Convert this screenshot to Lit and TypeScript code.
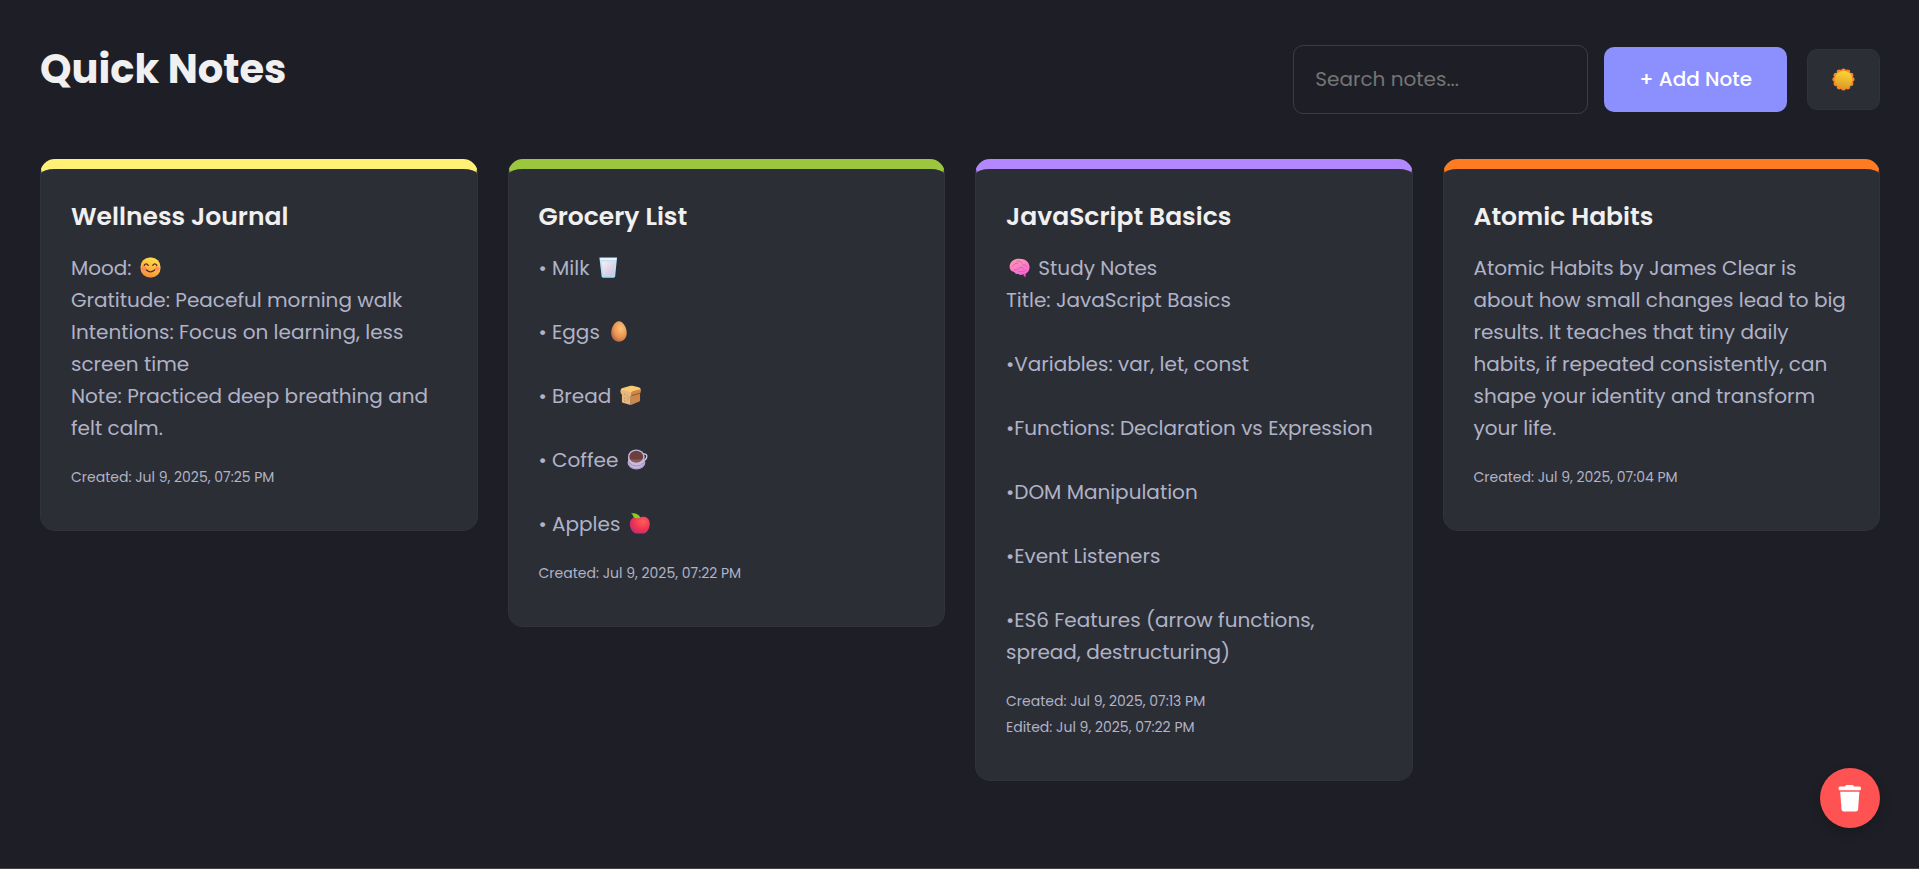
import { LitElement, html, css, svg, nothing } from "lit";
import { customElement, property, state } from "lit/decorators.js";

type EmojiName = "smile" | "milk" | "egg" | "bread" | "coffee" | "apple" | "brain" | "sun";
type Part = string | { emoji: EmojiName };

interface Note {
  title: string;
  tone: "yellow" | "green" | "purple" | "orange";
  lines: Part[][];
  created: string;
  edited?: string;
}

const e = (emoji: EmojiName): Part => ({ emoji });

const NOTES: Note[] = [
  {
    title: "Wellness Journal",
    tone: "yellow",
    lines: [
      ["Mood: ", e("smile")],
      ["Gratitude: Peaceful morning walk"],
      ["Intentions: Focus on learning, less screen time"],
      ["Note: Practiced deep breathing and felt calm."],
    ],
    created: "Jul 9, 2025, 07:25 PM",
  },
  {
    title: "Grocery List",
    tone: "green",
    lines: [
      ["• Milk ", e("milk")],
      [],
      ["• Eggs ", e("egg")],
      [],
      ["• Bread ", e("bread")],
      [],
      ["• Coffee ", e("coffee")],
      [],
      ["• Apples ", e("apple")],
    ],
    created: "Jul 9, 2025, 07:22 PM",
  },
  {
    title: "JavaScript Basics",
    tone: "purple",
    lines: [
      [e("brain"), " Study Notes"],
      ["Title: JavaScript Basics"],
      [],
      ["•Variables: var, let, const"],
      [],
      ["•Functions: Declaration vs Expression"],
      [],
      ["•DOM Manipulation"],
      [],
      ["•Event Listeners"],
      [],
      ["•ES6 Features (arrow functions, spread, destructuring)"],
    ],
    created: "Jul 9, 2025, 07:13 PM",
    edited: "Jul 9, 2025, 07:22 PM",
  },
  {
    title: "Atomic Habits",
    tone: "orange",
    lines: [
      [
        "Atomic Habits by James Clear is about how small changes lead to big results. It teaches that tiny daily habits, if repeated consistently, can shape your identity and transform your life.",
      ],
    ],
    created: "Jul 9, 2025, 07:04 PM",
  },
];

const rays = Array.from({ length: 12 }, (_, i) => {
  const a = (i * Math.PI) / 6;
  return svg`<circle cx=${12 + 9 * Math.sin(a)} cy=${12 - 9 * Math.cos(a)} r="2.6" fill="#f8862b" />`;
});

const EMOJI = {
  smile: svg`
    <defs>
      <linearGradient id="g" x1="0.7" y1="0" x2="0.3" y2="1">
        <stop offset="0" stop-color="#ffe04f" /><stop offset="0.6" stop-color="#ffb136" /><stop offset="1" stop-color="#f5893f" />
      </linearGradient>
    </defs>
    <rect x="0.6" y="0.6" width="22.8" height="22.8" rx="10.4" fill="url(#g)" />
    <circle cx="4.4" cy="13.2" r="2.7" fill="#ff6f6a" opacity="0.6" />
    <circle cx="19.6" cy="13.2" r="2.7" fill="#ff6f6a" opacity="0.6" />
    <path d="M4.8 9.6q2.2-3.6 4.6 0M14.6 9.6q2.4-3.6 4.6 0M7.4 14.9q4.6 4.2 9.2 0" fill="none" stroke="#4b2a3f" stroke-width="1.5" stroke-linecap="round" />`,
  milk: svg`
    <defs>
      <linearGradient id="g" x1="0" y1="0" x2="0" y2="1">
        <stop offset="0" stop-color="#c4e4f8" /><stop offset="1" stop-color="#a9dcf6" />
      </linearGradient>
      <linearGradient id="m" x1="0" y1="0" x2="1" y2="1">
        <stop offset="0" stop-color="#f6f1fa" /><stop offset="1" stop-color="#cdbfd8" />
      </linearGradient>
    </defs>
    <path d="M1.6 0.6h20.2l-2.2 21.4q-.2 1.6-1.8 1.6H5.9q-1.6 0-1.8-1.6z" fill="url(#g)" />
    <path d="M4.4 5h14.8l-1.6 16H6z" fill="url(#m)" />
    <path d="M2.6 1.2h18.4l-.3 2.2H3z" fill="#e6f5fd" />`,
  egg: svg`
    <defs>
      <radialGradient id="g" cx="0.62" cy="0.35" r="0.75">
        <stop offset="0" stop-color="#ffc37d" /><stop offset="0.6" stop-color="#e8944f" /><stop offset="1" stop-color="#a95a45" />
      </radialGradient>
    </defs>
    <path d="M12.500 .2c4.600 0 8.900 6.900 8.900 13.500 0 6-3.900 9.900-8.900 9.900S3.600 19.700 3.600 13.700C3.600 7.100 7.900.2 12.500 .2z" fill="url(#g)" />`,
  bread: svg`
    <path d="M.8 7.800Q.2 4.400 3 3.500L12 .9q1-.3 2.200-.1l7.200 1.900q2.600.8 2.400 3.500L12.600 10z" fill="#f9ca74" />
    <path d="M12.200 10q.3-2.400 3-3.100l5.800-1.600q2.800-.2 2.800 1.900-.1 1.500-.9 2.200v8.200q0 .9-.9 1.300L12.600 22.800z" fill="#cd8847" />
    <path d="M12.600 12.400l10.400-3" stroke="#9a5c33" stroke-width="1.200" fill="none" />
    <path d="M.6 7.600Q.8 5.200 3.400 5.800l6.600 1.700q3 .9 2.900 3.500-.1 1.300-.7 1.800v10L3.200 20.300q-1-.3-1-1.300v-8.200Q.6 9.800.6 7.600z" fill="#e6b880" />
    <path d="M5 10.500h.1M8 12.500h.1M5.500 15h.1M8.800 17h.1M5.300 18.300h.1M10 14.500h.1" stroke="#a9784e" stroke-width="1.100" stroke-linecap="round" />`,
  coffee: svg`
    <path d="M17 5.800q6.200-1.200 5.600 3.200-.8 4.400-6.600 5.800" fill="none" stroke="#ddd6ea" stroke-width="1.500" />
    <ellipse cx="10.800" cy="15.800" rx="10.200" ry="7.600" fill="#b3a4cd" />
    <path d="M1.200 8.600c0 8 3.800 13.200 9.400 13.200S20 16.600 20 8.600z" fill="#cbbfdf" />
    <path d="M2.500 15.500q3.500 4 8.300 4t8-4" fill="none" stroke="#9485b3" stroke-width="1" />
    <ellipse cx="10.600" cy="8.600" rx="9.400" ry="8" fill="#c0b3d6" />
    <ellipse cx="10.600" cy="8.800" rx="7.900" ry="6.700" fill="#6b3f3e" />
    <path d="M4.200 11q6.200 2 12.800 0-2 4-6.400 4t-6.400-4z" fill="#8d5a52" />`,
  apple: svg`
    <defs>
      <radialGradient id="g" cx="0.65" cy="0.3" r="0.85">
        <stop offset="0" stop-color="#ff5d5d" /><stop offset="0.55" stop-color="#ee3350" /><stop offset="1" stop-color="#b32a86" />
      </radialGradient>
    </defs>
    <path d="M12.600 5.200C15 3.200 23.800 3.600 23.700 12.500c0 5.300-3.400 11-7.600 11-1.400 0-2.200-.2-3.500-.2s-2.100.2-3.500.2C4.900 23.500 1.100 18.500 1 12.500.900 4.300 9.800 3 12.600 5.200z" fill="url(#g)" />
    <path d="M2 .4q8.500-1.200 11 5Q5.200 7 4.600 3 4.200 1.300 2 .4z" fill="#7ed321" />`,
  brain: svg`
    <defs>
      <linearGradient id="g" x1="0.2" y1="0" x2="0.6" y2="1">
        <stop offset="0" stop-color="#ff9cb0" /><stop offset="1" stop-color="#f765d9" />
      </linearGradient>
    </defs>
    <path d="M16 16h3.500l-.6 6.600q-1.800.4-2-.8z" fill="#e055b8" />
    <path d="M.7 11.500C.5 5.500 6 1.800 12 1.900c6.400 0 11.500 4 11.500 9.600 0 4.300-2.500 7.600-6.300 7.700-1.800 1.800-5 1.600-6.300.2-2.300.4-4.200-.5-4.800-2.300C3 17 .8 15 .7 11.500z" fill="url(#g)" />
    <path d="M4 10.500q2-4 6-3.500M9 4.500q4-1 6 2.500M6 14.500q4 1 6-2.500 4-1 5 1.500M16 9q3-1 4.500 2M11 16.500q4 1.500 8-1" fill="none" stroke="#dd55a8" stroke-width="0.9" stroke-linecap="round" />`,
  sun: svg`
    <defs>
      <linearGradient id="g" x1="0.6" y1="0" x2="0.4" y2="1">
        <stop offset="0" stop-color="#fdd835" /><stop offset="1" stop-color="#dd9a26" />
      </linearGradient>
    </defs>
    ${rays}
    <circle cx="12" cy="12" r="9.2" fill="url(#g)" />`,
};

@customElement("emoji-icon")
class EmojiIcon extends LitElement {
  static styles = css`
    :host {
      display: inline-block;
      width: 21px;
      height: 21px;
      margin: 0 3px;
      vertical-align: -3px;
    }
    .art {
      display: block;
      width: 100%;
      height: 100%;
    }
  `;
  @property() name: EmojiName = "smile";
  render() {
    return html`<svg class="art" viewBox="0 0 24 24" aria-hidden="true">${EMOJI[this.name]}</svg>`;
  }
}

@customElement("note-card")
class NoteCard extends LitElement {
  static styles = css`
    :host {
      display: block;
    }
    .card {
      border: 1px solid #30323c;
      border-top: 10px solid;
      border-radius: 15px;
      background: #2c2e36;
      padding: 30px 30px 40px;
    }
    .yellow {
      border-top-color: #fff176;
    }
    .green {
      border-top-color: #9dc63f;
    }
    .purple {
      border-top-color: #b388ff;
    }
    .orange {
      border-top-color: #ff7b22;
    }
    .title {
      margin: 0 0 17px;
      color: #f0f0f0;
      font-size: 25px;
      font-weight: 600;
      line-height: 36px;
    }
    .line {
      margin: 0;
      min-height: 32px;
      line-height: 32px;
      font-size: 20px;
    }
    .meta {
      margin-top: 20px;
      font-size: 14px;
      line-height: 26px;
    }
  `;
  @property({ attribute: false }) note!: Note;
  render() {
    const n = this.note;
    return html`
      <article class="card ${n.tone}">
        <h2 class="title">${n.title}</h2>
        ${n.lines.map(
          (line) =>
            html`<p class="line">${line.map((p) =>
              typeof p === "string" ? p : html`<emoji-icon name=${p.emoji}></emoji-icon>`,
            )}</p>`,
        )}
        <div class="meta">
          <div>Created: ${n.created}</div>
          ${n.edited ? html`<div>Edited: ${n.edited}</div>` : nothing}
        </div>
      </article>
    `;
  }
}

@customElement("app-root")
class AppRoot extends LitElement {
  static styles = css`
    :host {
      display: block;
      color: #b0b3c6;
      font-family: Poppins, Inter, "Open Sans", sans-serif;
      font-size: 20px;
    }
    .page {
      box-sizing: border-box;
      min-height: 100vh;
      padding: 45px 39px 40px 40px;
      border-bottom: 1px solid #45433f;
      background: #1e1f26;
    }
    .header {
      display: flex;
      flex-wrap: wrap;
      justify-content: space-between;
      gap: 20px;
      margin-bottom: 45px;
    }
    .heading {
      margin: 0;
      color: #f0f0f0;
      font-size: 40px;
      font-weight: 700;
      line-height: 48px;
    }
    .tools {
      display: flex;
      align-items: center;
      gap: 20px;
    }
    .find {
      display: flex;
      align-items: center;
      gap: 16px;
    }
    .search {
      box-sizing: border-box;
      width: 295px;
      height: 69px;
      padding: 0 21px 2px;
      border: 1px solid #3a3b47;
      border-radius: 10px;
      background: transparent;
      color: #f0f0f0;
      font: inherit;
    }
    .search::placeholder {
      color: #757575;
      opacity: 1;
    }
    .add {
      height: 65px;
      padding: 0 35px 2px;
      border: 0;
      border-radius: 10px;
      background: #8c90ff;
      color: #fff;
      font: inherit;
      font-weight: 500;
    }
    .theme {
      display: grid;
      place-items: center;
      width: 73px;
      height: 61px;
      padding: 0;
      border: 1px solid #30323c;
      border-radius: 10px;
      background: #2c2e36;
    }
    .sun {
      width: 23px;
      height: 23px;
      margin: 0;
    }
    .grid {
      display: grid;
      grid-template-columns: repeat(auto-fill, minmax(360px, 1fr));
      align-items: start;
      gap: 30px;
    }
    .trash {
      position: fixed;
      right: 39px;
      bottom: 41px;
      display: grid;
      place-items: center;
      width: 60px;
      height: 60px;
      padding: 0;
      border: 0;
      border-radius: 50%;
      background: #ff5252;
      box-shadow: 0 4px 12px rgba(0, 0, 0, 0.2);
    }
  `;
  @state() private query = "";

  render() {
    const q = this.query.toLowerCase();
    const shown = NOTES.filter((n) => n.title.toLowerCase().includes(q));
    return html`
      <main class="page">
        <header class="header">
          <h1 class="heading">Quick Notes</h1>
          <div class="tools">
            <div class="find">
              <input
                class="search"
                type="text"
                placeholder="Search notes..."
                aria-label="Search notes"
                @input=${(ev: InputEvent) => (this.query = (ev.target as HTMLInputElement).value)}
              />
              <button class="add" type="button">+ Add Note</button>
            </div>
            <button class="theme" type="button" aria-label="Toggle theme">
              <emoji-icon class="sun" name="sun"></emoji-icon>
            </button>
          </div>
        </header>
        <section class="grid">${shown.map((n) => html`<note-card .note=${n}></note-card>`)}</section>
        <button class="trash" type="button" aria-label="Trash">
          <svg width="24" height="27" viewBox="0 0 24 27" fill="#fff" aria-hidden="true">
            <path d="M8.5 0h6q1 0 1.300 1.500h5.700q1.500 0 1.500 1.500v.7q0 1.500-1.500 1.500H2Q.5 5.200.5 3.700V3Q.5 1.500 2 1.500h5.200Q7.500 0 8.500 0z" />
            <path d="M2.200 6.700h19.200l-1.300 17.600q-.2 2.200-2.300 2.200H5.800q-2.100 0-2.300-2.200z" />
          </svg>
        </button>
      </main>
    `;
  }
}
